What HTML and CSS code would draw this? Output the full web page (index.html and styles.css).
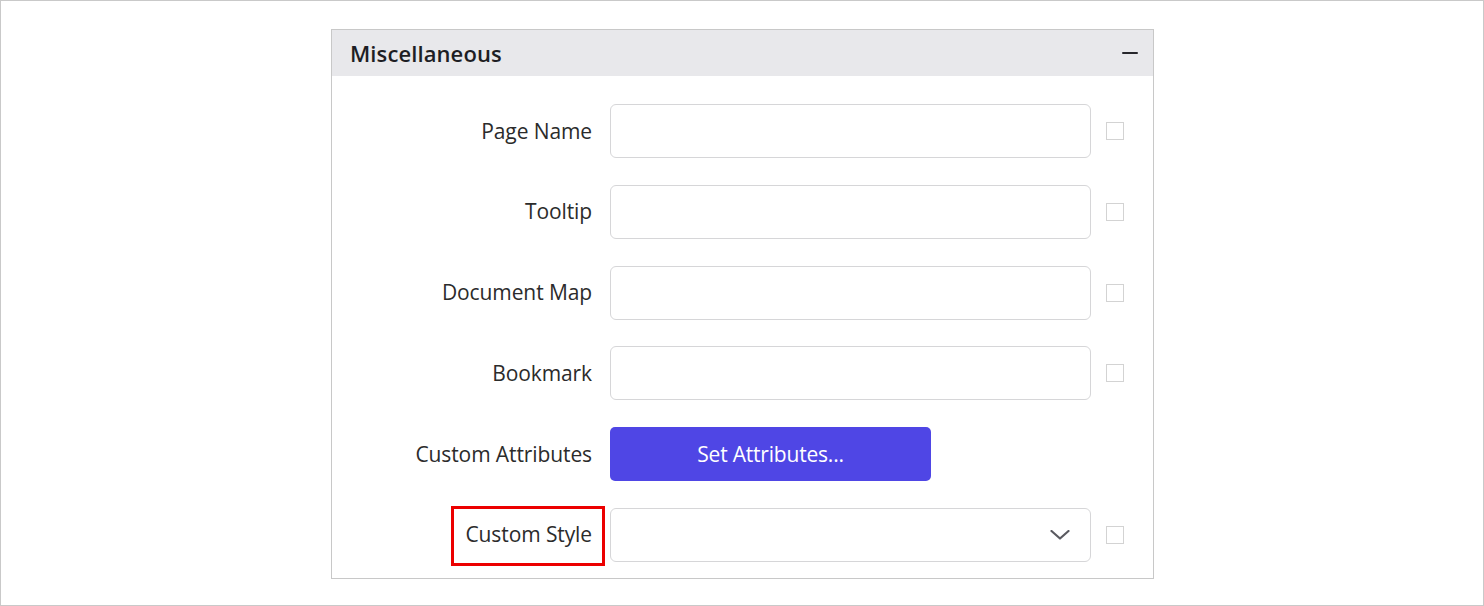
FILE: index.html
```html
<!DOCTYPE html>
<html lang="en">
<head>
<meta charset="utf-8">
<title>Miscellaneous</title>
<link rel="stylesheet" href="styles.css">
</head>
<body>
<div class="frame">
  <section class="panel">
    <header class="panel-head">
      <h2 class="panel-title">Miscellaneous</h2>
      <span class="collapse" aria-label="Collapse"></span>
    </header>
    <div class="panel-body">
      <div class="row">
        <label class="label">Page Name</label>
        <input class="field" type="text">
        <span class="check"></span>
      </div>
      <div class="row">
        <label class="label">Tooltip</label>
        <input class="field" type="text">
        <span class="check"></span>
      </div>
      <div class="row">
        <label class="label">Document Map</label>
        <input class="field" type="text">
        <span class="check"></span>
      </div>
      <div class="row">
        <label class="label">Bookmark</label>
        <input class="field" type="text">
        <span class="check"></span>
      </div>
      <div class="row">
        <label class="label">Custom Attributes</label>
        <button class="btn" type="button">Set Attributes...</button>
      </div>
      <div class="row">
        <label class="label"><span class="highlight">Custom Style</span></label>
        <div class="field select">
          <svg class="chevron" viewBox="0 0 20 10" width="20" height="10"><path d="M1.5 1 L10 8.5 L18.5 1" fill="none" stroke="#5a5a60" stroke-width="2.2" stroke-linecap="round" stroke-linejoin="round"/></svg>
        </div>
        <span class="check"></span>
      </div>
    </div>
  </section>
</div>
</body>
</html>
```

FILE: styles.css
```css
* { box-sizing: border-box; }
html, body { margin: 0; padding: 0; background: #fff; }
body {
  font-family: "Open Sans", "Noto Sans", "Liberation Sans", sans-serif;
  color: #2b2b2b;
}
.frame {
  width: 1484px;
  height: 606px;
  border: 1px solid #c9c9c9;
  padding: 28px 0 0 330px;
}
.panel {
  width: 823px;
  border: 1px solid #c8c8c8;
  background: #fff;
}
.panel-head {
  height: 46px;
  background: #e8e8eb;
  display: flex;
  align-items: center;
  justify-content: space-between;
  padding: 0 15px 0 18px;
}
.panel-title {
  margin: 0;
  font-size: 22px;
  font-weight: 600;
  color: #1e1e24;
  letter-spacing: 0.1px;
}
.collapse {
  width: 16px;
  height: 2px;
  background: #26262b;
  border-radius: 1px;
}
.panel-body {
  display: flex;
  flex-direction: column;
  gap: 26.8px;
  padding: 28px 0 16px 0;
}
.row {
  display: flex;
  align-items: center;
  height: 54px;
}
.label {
  width: 260px;
  text-align: right;
  font-size: 21px;
  line-height: 29px;
  color: #2b2b2b;
  margin-right: 18px;
  letter-spacing: -0.1px;
}
.field {
  width: 481px;
  height: 54px;
  border: 1px solid #d6d6d8;
  border-radius: 6px;
  background: #fff;
  font: inherit;
  margin: 0;
  padding: 0 12px;
  outline: none;
}
.select {
  display: flex;
  align-items: center;
  justify-content: flex-end;
  padding-right: 20px;
}
.chevron { display: block; }
.check {
  width: 18px;
  height: 18px;
  border: 1px solid #d3d3d3;
  margin-left: 15px;
  background: #fff;
}
.btn {
  width: 321px;
  height: 54px;
  border: none;
  border-radius: 5px;
  background: #4f46e5;
  color: #fff;
  font-family: inherit;
  font-size: 21px;
  letter-spacing: -0.2px;
  cursor: pointer;
}
.highlight {
  position: relative;
  display: inline-block;
}
.highlight::after {
  content: "";
  position: absolute;
  left: -14px;
  right: -13px;
  top: -14px;
  bottom: -17px;
  border: 3px solid #ec0000;
}
```
